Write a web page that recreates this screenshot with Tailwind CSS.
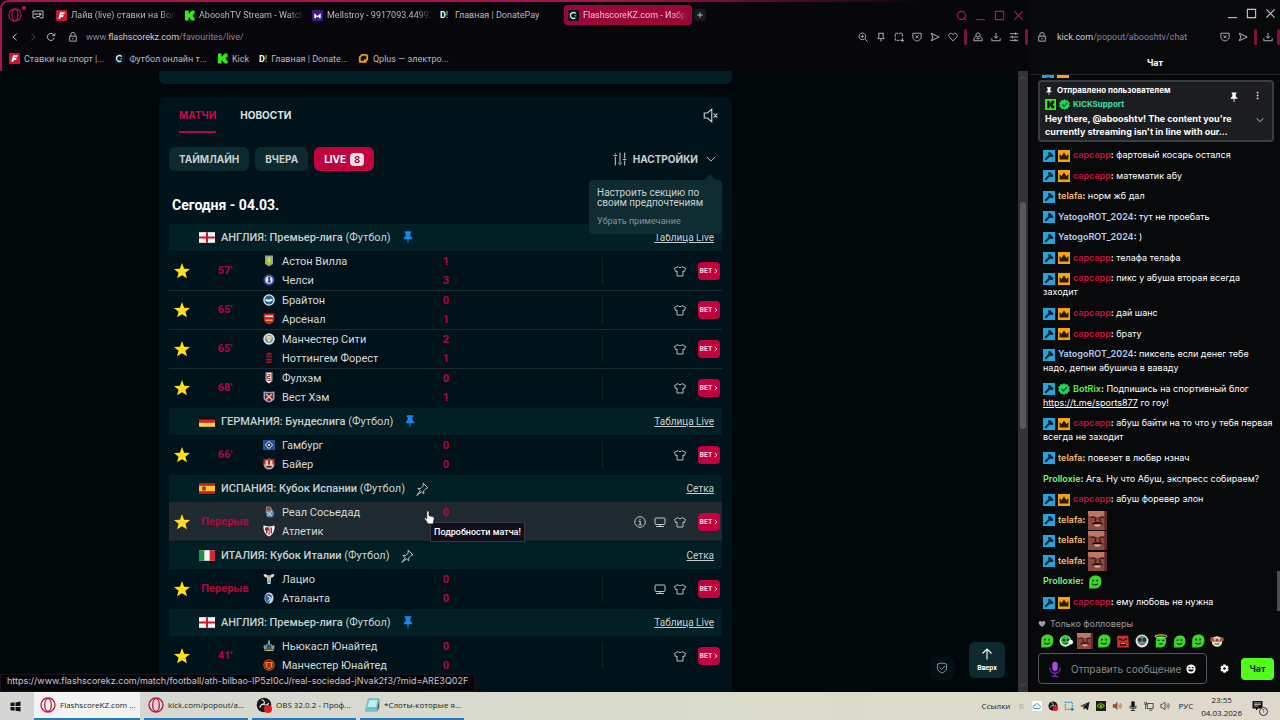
<!DOCTYPE html>
<html lang="ru">
<head>
    <meta charset="UTF-8">
    <meta name="viewport" content="width=device-width, initial-scale=1.0">
    <title>FlashscoreKZ.com - Избранное</title>
    <script src="https://cdn.jsdelivr.net/npm/@tailwindcss/browser@4"></script>
</head>
<body class="h-screen flex flex-col overflow-hidden bg-[#07060b] text-[#b9b6c2] font-['Roboto','Liberation_Sans',sans-serif] text-[9px] leading-[12px]">

    <!-- Icons -->
    <svg class="hidden" xmlns="http://www.w3.org/2000/svg">
        <symbol id="opera" viewBox="0 0 24 24"><g fill="none" stroke="#c01648" stroke-width="2"><circle cx="12" cy="12" r="10.5"/><ellipse cx="12" cy="12" rx="5" ry="9.5"/></g></symbol>
        <symbol id="gamepad" viewBox="0 0 24 24"><path d="M2 4h20v14h-5l-2-3H9l-2 3H2zM6 8v4M10 8v4M14 9h4v3h-4z" fill="none" stroke="currentColor" stroke-width="2"/></symbol>
        <symbol id="flash" viewBox="0 0 24 24"><rect width="24" height="24" rx="3" fill="#d2152f"/><path d="M9 5h10l-1 4h-6l-.5 2h5l-1 4h-5L9 19H5z" fill="#fff"/></symbol>
        <symbol id="kick" viewBox="0 0 24 24"><path d="M2 1h8v6h3V4h3V1h7v8h-3v3h-1v1h1v3h3v7h-7v-3h-3v-3h-3v6H2z" fill="#35e81c"/></symbol>
        <symbol id="kickbox" viewBox="0 0 24 24"><rect width="24" height="24" fill="#35e81c"/><path d="M5 4h5v5h2V7h2V4h6v6h-3v4h3v6h-6v-3h-2v-2h-2v5H5z" fill="#0b1208"/></symbol>
        <symbol id="mell" viewBox="0 0 24 24"><rect width="24" height="24" rx="3" fill="#3b1a86"/><path d="M5 18V7l7 6 7-6v11h-4v-4l-3 2-3-2v4z" fill="#fff"/></symbol>
        <symbol id="fscore" viewBox="0 0 24 24"><rect width="24" height="24" rx="4" fill="#06161d"/><path d="M17 8a6.500 6.500 0 1 0-1 9" fill="none" stroke="#dfe8e8" stroke-width="3"/><path d="M14 11h4v3h-4z" fill="#16b89c"/></symbol>
        <symbol id="qplus" viewBox="0 0 24 24"><path d="M19 4H9L4 9v10h11l5-5V4M14 14l4 7" fill="none" stroke="#f09a1c" stroke-width="4"/></symbol>
        <symbol id="back" viewBox="0 0 24 24"><path d="M16 4l-9 8 9 8" fill="none" stroke="currentColor" stroke-width="2.400"/></symbol>
        <symbol id="fwd" viewBox="0 0 24 24"><path d="M8 4l9 8-9 8" fill="none" stroke="currentColor" stroke-width="2.400"/></symbol>
        <symbol id="bet" viewBox="0 0 12 16"><path d="M2 2l7 6-7 6" fill="none" stroke="currentColor" stroke-width="3"/></symbol>
        <symbol id="reload" viewBox="0 0 24 24"><path d="M20 14a8.500 8.500 0 1 1-2-8l3 3M21 3v6h-6" fill="none" stroke="currentColor" stroke-width="2.400"/></symbol>
        <symbol id="lock" viewBox="0 0 24 24"><path d="M4 10h16v12H4zM7 10V6a5 5 0 0 1 10 0v4M12 14v4" fill="none" stroke="currentColor" stroke-width="2.200"/></symbol>
        <symbol id="zoom" viewBox="0 0 24 24"><path d="M10.500 2.500a8 8 0 1 0 .01 0M17 17l6 6M10.500 7v7M7 10.500h7" fill="none" stroke="currentColor" stroke-width="2.200"/></symbol>
        <symbol id="search" viewBox="0 0 24 24"><path d="M12 3a9 9 0 1 0 .01 0M17 17l5 5" fill="none" stroke="currentColor" stroke-width="2.200"/></symbol>
        <symbol id="tack" viewBox="0 0 24 24"><path d="M5 3h14M7 3v9l-3 4h16l-3-4V3M12 16v7" fill="none" stroke="currentColor" stroke-width="2.200"/></symbol>
        <symbol id="capture" viewBox="0 0 24 24"><path d="M13 20H3V3h17v10" fill="none" stroke="currentColor" stroke-width="2.200" stroke-dasharray="7 2"/><path d="M20 14v10M15 20h9" stroke="currentColor" stroke-width="2.200"/></symbol>
        <symbol id="shield" viewBox="0 0 24 24"><path d="M2 3h20v10c0 5-6 7-10 9-4-2-10-4-10-9zM8.500 8l7 7M15.500 8l-7 7" fill="none" stroke="currentColor" stroke-width="2.200"/></symbol>
        <symbol id="send" viewBox="0 0 24 24"><path d="M3 3l19 9-19 9 4-9z" fill="none" stroke="currentColor" stroke-width="2.400"/></symbol>
        <symbol id="heart" viewBox="0 0 24 24"><path d="M12 21C5 15 2 12 2 8c0-5 7-7 10-2 3-5 10-3 10 2 0 4-3 7-10 13z" fill="none" stroke="currentColor" stroke-width="2.200"/></symbol>
        <symbol id="heartfill" viewBox="0 0 24 24"><path d="M12 21C5 15 2 12 2 8c0-5 7-7 10-2 3-5 10-3 10 2 0 4-3 7-10 13z" fill="currentColor"/></symbol>
        <symbol id="user" viewBox="0 0 24 24"><path d="M12 2a5 5 0 1 0 .01 0M7 10l-5 6v5h20v-5l-5-6M8 16h8" fill="none" stroke="currentColor" stroke-width="2.200"/></symbol>
        <symbol id="download" viewBox="0 0 24 24"><path d="M12 2v13M7 10l5 5 5-5M2 15v6h20v-6" fill="none" stroke="currentColor" stroke-width="2.200"/></symbol>
        <symbol id="menu" viewBox="0 0 24 24"><path d="M2 4h20M2 12h20M2 20h20M16 1v6M8 9v6M14 17v6" fill="none" stroke="currentColor" stroke-width="2.200"/></symbol>
        <symbol id="min" viewBox="0 0 24 24"><path d="M2 21h20" stroke="currentColor" stroke-width="2.400"/></symbol>
        <symbol id="max" viewBox="0 0 24 24"><path d="M3 3h18v18H3z" fill="none" stroke="currentColor" stroke-width="2.400"/></symbol>
        <symbol id="close" viewBox="0 0 24 24"><path d="M3 3l18 18M21 3L3 21" stroke="currentColor" stroke-width="2.400"/></symbol>
        <symbol id="plus" viewBox="0 0 24 24"><path d="M12 4v16M4 12h16" stroke="currentColor" stroke-width="3"/></symbol>
        <symbol id="mute" viewBox="0 0 24 24"><path d="M2 8h5l7-6v20l-7-6H2zM17 9l6 6M23 9l-6 6" fill="none" stroke="currentColor" stroke-width="1.800"/></symbol>
        <symbol id="sliders" viewBox="0 0 24 24"><path d="M4 2v2M4 8v15M12 1v16M12 21v2M20 1v10M20 15v8M1 6h6M9 19h6M17 13h6" fill="none" stroke="currentColor" stroke-width="1.700"/></symbol>
        <symbol id="chev" viewBox="0 0 24 24"><path d="M2 7l10 10L22 7" fill="none" stroke="currentColor" stroke-width="2.200"/></symbol>
        <symbol id="star" viewBox="0 0 24 24"><path d="M12 0l3.200 8.500L24 9l-6.900 5.500L19.500 23 12 18.200 4.500 23l2.400-8.500L0 9l8.800-.5z" fill="#ffdf1b"/></symbol>
        <symbol id="pinon" viewBox="0 0 24 32"><path d="M4 1h16v3l-2 2v7l4 4v3h-8l-2 12-2-12H2v-3l4-4V6L4 4z" fill="#1d83ea"/></symbol>
        <symbol id="pinoff" viewBox="0 0 24 24"><path d="M14 2l8 8-3 1-4 4v5l-4-3-8 6 6-8-4-4h5l4-4z" fill="none" stroke="currentColor" stroke-width="1.600"/></symbol>
        <symbol id="shirt" viewBox="0 0 24 24"><path d="M8 3L1 7l2 6 3-1v10h12V12l3 1 2-6-7-4c-1 3-7 3-8 0z" fill="none" stroke="currentColor" stroke-width="1.800"/></symbol>
        <symbol id="tv" viewBox="0 0 24 24"><path d="M4 4h16a2 2 0 0 1 2 2v9a2 2 0 0 1-2 2H4a2 2 0 0 1-2-2V6a2 2 0 0 1 2-2zM4 21h16M12 17v4" fill="none" stroke="currentColor" stroke-width="1.900"/></symbol>
        <symbol id="info" viewBox="0 0 24 24"><path d="M12 1.500a10.500 10.500 0 1 0 .01 0M9 10.500h3.500V17M8.500 17.500h7M12 6v2.500" fill="none" stroke="currentColor" stroke-width="2"/></symbol>
        <symbol id="okshield" viewBox="0 0 24 24"><path d="M3 4l9-2 9 2v9c0 5-5 7-9 9-4-2-9-4-9-9zM7 11l4 4 7-7" fill="none" stroke="currentColor" stroke-width="2"/></symbol>
        <symbol id="up" viewBox="0 0 24 24"><path d="M12 2v21M3 11l9-9 9 9" fill="none" stroke="currentColor" stroke-width="2.200"/></symbol>
        <symbol id="hammer" viewBox="0 0 24 24"><rect width="24" height="24" fill="#20a5e0"/><path d="M10 5l4-1 7 7-2 3h-3l-2-1-8 8-3-3 8-8z" fill="#06202d"/></symbol>
        <symbol id="crown" viewBox="0 0 24 24"><rect width="24" height="24" fill="#f6a414"/><path d="M3 8l4 4 5-7 5 7 4-4v11H3z" fill="#2b1a02"/></symbol>
        <symbol id="verified" viewBox="0 0 24 24"><path d="M12 0l3 3 4-1 1 4 4 2-2 4 2 4-4 2-1 4-4-1-3 3-3-3-4 1-1-4-4-2 2-4-2-4 4-2 1-4 4 1z" fill="#1ed65a"/><path d="M7 12l4 4 7-8" fill="none" stroke="#053" stroke-width="3"/></symbol>
        <symbol id="pinwhite" viewBox="0 0 24 24"><path d="M6 1h12v2l-2 2v6l4 3v2h-7v8h-2v-8H4v-2l4-3V5L6 3z" fill="#fff"/></symbol>
        <symbol id="laugh" viewBox="0 0 28 28"><rect width="28" height="28" fill="#8d4a42"/><path d="M0 0h28v6c-8 4-20 4-28 0z" fill="#b97766"/><path d="M4 10c3-2 6-1 8 1M16 11c2-2 5-3 8-1M12 11l-2 5M17 12l2 4" fill="none" stroke="#43181a" stroke-width="2"/><path d="M5 20c2-5 16-5 18 0l-4-1H9z" fill="#1f0c0d"/><path d="M9 20h10l-2 3h-6z" fill="#d9b3a4"/><path d="M24 0h4v28h-4z" fill="#5e2b2c"/></symbol>
        <symbol id="blob" viewBox="0 0 24 24"><path d="M2 23V12C2 5 6 1 13 1s10 4 10 10-4 12-11 12z" fill="#3fd42c"/><path d="M7 8h3v3H7zM14 8h3v3h-3z" fill="#0b4a10"/><path d="M7 15c3 3 7 3 10 0" fill="none" stroke="#0b4a10" stroke-width="2"/></symbol>
        <symbol id="blobhp" viewBox="0 0 24 24"><circle cx="11" cy="12" r="10" fill="#e7efe6"/><circle cx="11" cy="11" r="8" fill="#2fc93a"/><path d="M7 9h3v3H7zM14 9h3v3h-3zM8 16h7" stroke="#0b4a10" stroke-width="1.500"/><circle cx="20" cy="14" r="4" fill="#fff"/></symbol>
        <symbol id="blobred" viewBox="0 0 24 24"><path d="M2 3h19l1 20H2z" fill="#c9302f"/><path d="M5 8l6 3M19 8l-6 3" stroke="#2c0404" stroke-width="2.500"/><path d="M7 15h10v5H7z" fill="#2c0404"/><path d="M8 16h8v1H8z" fill="#fff"/></symbol>
        <symbol id="blobclown" viewBox="0 0 24 24"><circle cx="12" cy="12" r="11" fill="#e9e3ee"/><circle cx="12" cy="11" r="8" fill="#39b549"/><circle cx="8" cy="10" r="3.500" fill="#4a1763"/><circle cx="16" cy="10" r="3.500" fill="#4a1763"/><path d="M7 17c3 3 7 3 10 0z" fill="#c22fa0"/></symbol>
        <symbol id="blobhalo" viewBox="0 0 24 24"><path d="M3 23V12c0-5 3-8 9-8s9 3 9 8-3 11-9 11z" fill="#3fd42c"/><ellipse cx="12" cy="4" rx="10" ry="2.500" fill="none" stroke="#e6c95a" stroke-width="1.800"/><path d="M6 11h4M14 11h4M9 17h6" stroke="#0b4a10" stroke-width="2"/></symbol>
        <symbol id="blobears" viewBox="0 0 24 24"><circle cx="4" cy="9" r="4" fill="#b33a35"/><circle cx="20" cy="9" r="4" fill="#b33a35"/><circle cx="12" cy="13" r="9" fill="#dfe7c8"/><path d="M4 8h16v5H4z" fill="#a82b2b"/><path d="M7 10h3M14 10h3" stroke="#fff" stroke-width="2"/><path d="M8 17h8" stroke="#4c6b2a" stroke-width="2"/></symbol>
        <symbol id="mic" viewBox="0 0 24 24"><rect x="8" y="1" width="8" height="14" rx="4" fill="#b045e8"/><path d="M4 10c0 11 16 11 16 0M12 18v5M7 23h10" fill="none" stroke="#7a2db0" stroke-width="2"/></symbol>
        <symbol id="smile" viewBox="0 0 24 24"><circle cx="12" cy="12" r="11" fill="#fff"/><path d="M6 7h4v3H6zM14 7h4v3h-4zM5 13h14c-1 7-13 7-14 0z" fill="#111"/></symbol>
        <symbol id="gear" viewBox="0 0 24 24"><path d="M9 1h6l1 4 4-1 3 5-3 3 3 3-3 5-4-1-1 4H9l-1-4-4 1-3-5 3-3-3-3 3-5 4 1z" fill="#fff"/><circle cx="12" cy="12" r="3.500" fill="#0b0c0d"/></symbol>
        <symbol id="hand" viewBox="0 0 24 32"><path d="M8 2c3 0 3 2 3 4v6l8 2c3 1 4 3 3 6l-2 10H9L2 20c-2-3 1-5 3-3l1 2V4c0-1 0-2 2-2z" fill="#fff" stroke="#111" stroke-width="1.500"/></symbol>
        <symbol id="windows" viewBox="0 0 24 24"><path d="M1 4l9-1v8H1zM12 3l11-2v10H12zM1 13h9v8l-9-1zM12 13h11v10l-11-2z" fill="#111"/></symbol>
        <symbol id="obs" viewBox="0 0 24 24"><circle cx="12" cy="12" r="11" fill="#17171b"/><path d="M8 4c3 0 6 3 4 7M19 9c-1 3-5 4-8 2M6 16c0-3 3-6 6-5" fill="none" stroke="#ddd" stroke-width="1.800"/><circle cx="18" cy="18" r="6" fill="#e01b24"/></symbol>
        <symbol id="note" viewBox="0 0 24 24"><path d="M6 2h17l-4 20H1z" fill="#6cc3cf"/><path d="M8 5h12l-2 10H5z" fill="#c8edf0"/><path d="M19 22l4-20v14z" fill="#4c5a5e"/></symbol>
        <symbol id="cloud" viewBox="0 0 24 24"><rect width="24" height="24" rx="3" fill="#fff"/><path d="M6 18a4 4 0 0 1 1-8c1-5 8-5 9 0 5 0 5 8 1 8z" fill="none" stroke="#2877c9" stroke-width="2"/></symbol>
        <symbol id="snip" viewBox="0 0 24 24"><path d="M3 3h17v17H3z" fill="none" stroke="#2680b8" stroke-width="2.500" stroke-dasharray="4 2"/><circle cx="20" cy="20" r="3.500" fill="#2680b8"/></symbol>
        <symbol id="plane" viewBox="0 0 24 24"><path d="M1 12L23 2l-4 20-7-5-3 4-1-7 10-8L5 14z" fill="#1b1b1b"/></symbol>
        <symbol id="nvidia" viewBox="0 0 24 24"><rect width="24" height="24" fill="#17220f"/><path d="M3 12c4-7 13-7 17 0-4 6-13 6-17 0z" fill="none" stroke="#76b900" stroke-width="2.500"/><circle cx="12" cy="12" r="3" fill="#76b900"/></symbol>
        <symbol id="spk" viewBox="0 0 24 24"><path d="M2 8h5l6-6v20l-6-6H2z" fill="currentColor"/><path d="M16 8c2 3 2 5 0 8M19 5c4 4 4 10 0 14" fill="none" stroke="currentColor" stroke-width="2"/></symbol>
        <symbol id="vol" viewBox="0 0 24 24"><path d="M2 8h4l6-5v18l-6-5H2zM16 8c2 3 2 5 0 8M19 5c4 4 4 10 0 14" fill="none" stroke="currentColor" stroke-width="1.800"/></symbol>
        <symbol id="blackmic" viewBox="0 0 24 24"><path d="M8 1h8v14H8z" fill="#111"/><path d="M5 11v6h14v-6M12 17v6M7 23h10" fill="none" stroke="#111" stroke-width="2"/></symbol>
        <symbol id="net" viewBox="0 0 24 24"><path d="M8 6h14v12H8zM12 22h8M2 2v6h4V2M4 8v12" fill="none" stroke="#222" stroke-width="1.800"/></symbol>
        <symbol id="notif" viewBox="0 0 24 24"><path d="M1 2h20v15h-9l-4 4v-4H1z" fill="#111"/><path d="M4 6h14M4 9h14M4 12h9" stroke="#ddd" stroke-width="1.500"/></symbol>

        <!-- Flags -->
        <symbol id="eng" viewBox="0 0 24 16"><rect width="24" height="16" fill="#f4f4f4"/><path d="M10.500 0h3v16h-3zM0 6.500h24v3H0z" fill="#d0142c"/></symbol>
        <symbol id="ger" viewBox="0 0 24 16"><rect width="24" height="16" fill="#111"/><path d="M0 5h24v6H0z" fill="#d22"/><path d="M0 10h24v6H0z" fill="#f7d34a"/></symbol>
        <symbol id="esp" viewBox="0 0 24 16"><rect width="24" height="16" fill="#c8202a"/><path d="M0 4h24v8H0z" fill="#f8c530"/><rect x="5" y="5" width="5" height="6" fill="#8a3a20"/></symbol>
        <symbol id="ita" viewBox="0 0 24 16"><rect width="24" height="16" fill="#f4f4f4"/><path d="M0 0h8v16H0z" fill="#1c8f4a"/><path d="M16 0h8v16h-8z" fill="#cf2b37"/></symbol>

        <!-- Club crests -->
        <symbol id="avl" viewBox="0 0 24 24"><path d="M4 1h16v17l-8 5-8-5z" fill="#8f9fa0"/><path d="M7 4h10v12l-5 4-5-4z" fill="#a9c92f"/><path d="M11 5h3v9h-3z" fill="#eee04a"/></symbol>
        <symbol id="che" viewBox="0 0 24 24"><circle cx="12" cy="12" r="11.500" fill="#3a3f96"/><circle cx="12" cy="12" r="7.500" fill="#dfe3f2"/><path d="M10 6h5l-1 5 2 6H9l2-5z" fill="#263a9a"/></symbol>
        <symbol id="bha" viewBox="0 0 24 24"><circle cx="12" cy="12" r="11.500" fill="#e8f1f7"/><circle cx="12" cy="12" r="9" fill="#1d6ca8"/><path d="M4 12c4-4 6 1 9-1s5-1 7 0c-3 5-12 6-16 1z" fill="#fff"/></symbol>
        <symbol id="ars" viewBox="0 0 24 24"><path d="M1 1h22l-1 14c-1 4-5 6-10 8-5-2-9-4-10-8z" fill="#c9232d"/><path d="M4 5h16v3H4z" fill="#f0d6d0"/><path d="M5 13h14v3H5z" fill="#d9a54a"/></symbol>
        <symbol id="mci" viewBox="0 0 24 24"><circle cx="12" cy="12" r="11.500" fill="#dfe6ea"/><circle cx="12" cy="12" r="8" fill="#6b98b4"/><path d="M7 6h10v6H7z" fill="#e7d58b"/><path d="M8 13h8l-4 5z" fill="#eee"/></symbol>
        <symbol id="nfo" viewBox="0 0 24 24"><path d="M8 12V6c0-5 8-5 8 0v6M12 3v10M6 15h12M6 18h12M7 21h10" fill="none" stroke="#b3122c" stroke-width="2.200"/></symbol>
        <symbol id="ful" viewBox="0 0 24 24"><path d="M5 1h14v17l-7 5-7-5z" fill="#f1f1f1"/><path d="M9 5h5v4H9v4h5v4H9" fill="none" stroke="#b32a2e" stroke-width="2"/><path d="M5 1h2v18l-2-1zM17 1h2v17l-2 1z" fill="#333"/></symbol>
        <symbol id="whu" viewBox="0 0 24 24"><path d="M1 1l11 1 11-1v14c-2 4-6 7-11 8-5-1-9-4-11-8z" fill="#97a7b8"/><path d="M4 4h16v11l-8 6-8-6z" fill="#7c2436"/><path d="M6 6l12 11M18 6L6 17" stroke="#e8c9a8" stroke-width="2.500"/></symbol>
        <symbol id="ham" viewBox="0 0 24 24"><rect y="2" width="24" height="20" fill="#1d55a5"/><path d="M12 4l8 8-8 8-8-8z" fill="#fff"/><path d="M12 6l6 6-6 6-6-6z" fill="#111"/><path d="M12 9l3 3-3 3-3-3z" fill="#fff"/></symbol>
        <symbol id="lev" viewBox="0 0 24 24"><circle cx="12" cy="12" r="11" fill="#d9a7a0"/><path d="M1 2h22v11H1z" fill="#c0202a"/><path d="M5 5h5v9H5zM14 5h5v9h-5z" fill="#f3d6b8"/><path d="M7 16h10v3H7z" fill="#222"/></symbol>
        <symbol id="rso" viewBox="0 0 24 24"><path d="M6 1h9l3 5-2 8H5z" fill="#b5773a"/><circle cx="14" cy="15" r="8" fill="#5d84b4"/><path d="M8 12l10 8M18 10L9 20" stroke="#dce6f0" stroke-width="2"/><path d="M8 3h6v5H8z" fill="#705038"/></symbol>
        <symbol id="ath" viewBox="0 0 24 24"><path d="M1 1l11 2 11-2c1 11-4 19-11 22C5 20 0 12 1 1z" fill="#efefef"/><path d="M6 5h3v12H6zM11 5h2v15h-2zM15 5h3v12h-3z" fill="#c8232c"/><path d="M4 5h7v6H4z" fill="#444"/></symbol>
        <symbol id="laz" viewBox="0 0 24 24"><path d="M1 3c4-1 7 0 8 2h6c1-2 4-3 8-2-1 5-4 6-7 6l-1 13H9L8 9C5 9 2 8 1 3z" fill="#dfe4d8"/><path d="M9 5h6v4H9z" fill="#b79a45"/><path d="M10 11h4v9h-4z" fill="#79b6dc"/></symbol>
        <symbol id="ata" viewBox="0 0 24 24"><ellipse cx="12" cy="12" rx="9" ry="11" fill="#cfd9e4"/><path d="M5 7c6-6 13-2 13 4-4 0-3 9-7 11-5-1-8-8-6-15z" fill="#2a62a8"/><path d="M9 8l6 3-4 7" fill="none" stroke="#fff" stroke-width="2"/></symbol>
        <symbol id="new" viewBox="0 0 24 24"><path d="M6 8h12v10l-6 5-6-5z" fill="#4d8b98"/><path d="M10 1h4v7h-4zM1 12c2-3 4-3 5 1v6H2zM23 12c-2-3-4-3-5 1v6h4z" fill="#8f9994"/><path d="M9 10h2v9H9zM13 10h2v9h-2z" fill="#16212a"/><path d="M3 20h18v2H3z" fill="#c8b060"/></symbol>
        <symbol id="mun" viewBox="0 0 24 24"><circle cx="12" cy="12" r="11.500" fill="#d4481f"/><circle cx="12" cy="12" r="9" fill="#2d130f"/><path d="M5 6h14v10l-7 5-7-5z" fill="#e88a1f"/><path d="M8 8h8v8l-4 3-4-3z" fill="#c31f1c"/></symbol>
    </svg>

    <div class="flex min-h-0 flex-1">

        <!-- Main browser window -->
        <div class="relative flex min-w-0 flex-1 flex-col">
            <!-- Glow on the window corner -->
            <div class="pointer-events-none absolute inset-x-0 top-0 h-20 rounded-tl-lg border-t-2 border-l-2 border-[#a5154a] [mask-image:linear-gradient(to_right,#000_60%,transparent_90%)]"></div>

            <div class="mt-0.5 flex h-[26px] items-center pl-2">
                <div class="relative"><svg class="size-[14px]"><use href="#opera"/></svg><i class="absolute -right-1 -top-0.5 size-1 rounded-full bg-[#b8174b]"></i></div>
                <svg class="ml-2.5 mr-2 size-3"><use href="#gamepad"/></svg>
                <a href="#" class="flex w-32 items-center gap-1 px-1"><svg class="size-[11px] shrink-0"><use href="#flash"/></svg><span class="overflow-hidden whitespace-nowrap [mask-image:linear-gradient(to_right,#000_85%,transparent)]">Лайв (live) ставки на Волейбол</span></a>
                <a href="#" class="flex w-32 items-center gap-1 px-1"><svg class="size-[11px] shrink-0"><use href="#kick"/></svg><span class="overflow-hidden whitespace-nowrap [mask-image:linear-gradient(to_right,#000_85%,transparent)]">AbooshTV Stream - Watch Live</span></a>
                <a href="#" class="flex w-32 items-center gap-1 px-1"><svg class="size-[11px] shrink-0"><use href="#mell"/></svg><span class="overflow-hidden whitespace-nowrap [mask-image:linear-gradient(to_right,#000_85%,transparent)]">Mellstroy - 9917093.449920</span></a>
                <a href="#" class="flex w-32 items-center gap-1 px-1"><b class="w-[11px] text-white">D<span class="text-[#2fc25b]">!</span></b><span class="whitespace-nowrap">Главная | DonatePay</span></a>
                <a href="#" class="flex h-5 w-32 items-center gap-1 rounded-sm bg-[#9c0537] px-1 text-[#f0c4d2]"><svg class="size-[11px] shrink-0"><use href="#fscore"/></svg><span class="overflow-hidden whitespace-nowrap [mask-image:linear-gradient(to_right,#000_85%,transparent)]">FlashscoreKZ.com - Избранное</span></a>
                <button aria-label="Новая вкладка" class="ml-0.5 flex size-3 items-center justify-center rounded-sm bg-[#1b1826]"><svg class="size-2"><use href="#plus"/></svg></button>
                <div class="ml-auto mr-1.5 flex gap-2 text-[#b8174b]">
                    <button aria-label="Поиск"><svg class="size-[11px]"><use href="#search"/></svg></button>
                    <button aria-label="Свернуть"><svg class="size-[11px]"><use href="#min"/></svg></button>
                    <button aria-label="Развернуть"><svg class="size-[11px]"><use href="#max"/></svg></button>
                    <button aria-label="Закрыть"><svg class="size-[11px]"><use href="#close"/></svg></button>
                </div>
            </div>

            <div class="flex h-[18px] items-center pl-2.5">
                <div class="flex items-center gap-2">
                    <button aria-label="Назад"><svg class="size-2.5"><use href="#back"/></svg></button>
                    <button aria-label="Вперёд" class="text-[#45424f]"><svg class="size-2.5"><use href="#fwd"/></svg></button>
                    <button aria-label="Обновить"><svg class="size-2.5"><use href="#reload"/></svg></button>
                    <svg class="ml-1 size-2.5"><use href="#lock"/></svg>
                </div>
                <span class="ml-2 text-[#8a82a8]">www.<span class="text-[#d0cdd8]">flashscorekz.com</span>/favourites/live/</span>
                <div class="ml-auto mr-1 flex items-center gap-2">
                    <button aria-label="Масштаб"><svg class="size-2.5"><use href="#zoom"/></svg></button>
                    <button aria-label="Закрепить"><svg class="size-2.5"><use href="#tack"/></svg></button>
                    <button aria-label="Снимок"><svg class="size-2.5"><use href="#capture"/></svg></button>
                    <button aria-label="Защита"><svg class="size-2.5"><use href="#shield"/></svg></button>
                    <button aria-label="Отправить"><svg class="size-2.5"><use href="#send"/></svg></button>
                    <button aria-label="Закладка"><svg class="size-2.5"><use href="#heart"/></svg></button>
                    <i class="-mx-0.5 h-4 w-[3px] rounded bg-[#7d1136]"></i>
                    <button aria-label="Профиль"><svg class="size-2.5"><use href="#user"/></svg></button>
                    <button aria-label="Загрузки"><svg class="size-2.5"><use href="#download"/></svg></button>
                    <button aria-label="Меню"><svg class="size-2.5"><use href="#menu"/></svg></button>
                    <i class="-mx-0.5 h-4 w-[3px] rounded bg-[#7d1136]"></i>
                </div>
            </div>

            <nav class="flex h-[25px] items-center gap-2.5 pl-[9px]">
                <a href="#" class="flex items-center gap-1"><svg class="size-[11px]"><use href="#flash"/></svg>Ставки на спорт |...</a>
                <a href="#" class="flex items-center gap-1"><svg class="size-[11px]"><use href="#fscore"/></svg>Футбол онлайн т...</a>
                <a href="#" class="flex items-center gap-1"><svg class="size-[11px]"><use href="#kick"/></svg>Kick</a>
                <a href="#" class="flex items-center gap-1"><b class="text-white">D<span class="text-[#2fc25b]">!</span></b>Главная | Donate...</a>
                <a href="#" class="flex items-center gap-1"><svg class="size-[11px]"><use href="#qplus"/></svg>Qplus — электро...</a>
            </nav>

            <div class="relative flex min-h-0 flex-1 bg-[#00080a]">
                <main class="ml-[159px] flex w-[573px] flex-col overflow-hidden">
                    <div class="mb-[13px] h-[13px] shrink-0 rounded-b-md bg-[#011f24]"></div>

                    <section class="flex-1 rounded-t-md bg-[#00131a] px-2.5 text-[11px] text-[#c9cfcf]">
                        <div class="flex h-9 items-center gap-6 px-2.5 font-['Inter'] text-[10px] font-bold">
                            <a href="#" class="flex h-full items-center border-y-2 border-t-transparent border-b-[#b80640] text-[#cc0845]">МАТЧИ</a>
                            <a href="#" class="text-[#dfe3e3]">НОВОСТИ</a>
                            <button aria-label="Звук" class="-mr-1.5 ml-auto"><svg class="size-[15px]"><use href="#mute"/></svg></button>
                        </div>

                        <div class="mt-3.5 flex items-center gap-1.5 font-['Inter'] text-[10px] font-bold">
                            <button class="h-6 rounded-md bg-[#0c2a30] px-2.5">ТАЙМЛАЙН</button>
                            <button class="h-6 rounded-md bg-[#0c2a30] px-2.5">ВЧЕРА</button>
                            <button class="flex h-6 items-center gap-1 rounded-md bg-[#c0033f] px-2.5 text-white">LIVE <span class="rounded-sm bg-[#f6dfe7] px-1 text-[9px] leading-[13px] text-[#a00838]">8</span></button>
                            <div class="relative ml-auto mr-1.5">
                                <button class="flex items-center gap-1.5"><svg class="size-[14px]"><use href="#sliders"/></svg>НАСТРОЙКИ<svg class="ml-0.5 size-[10px]"><use href="#chev"/></svg></button>
                                <div class="absolute -right-1.5 top-7 z-10 w-[133px] rounded bg-[#102c33] p-2 font-['Roboto'] font-normal leading-[10px]">
                                    <i class="absolute -top-1 right-2 size-2 rotate-45 bg-[#102c33]"></i>
                                    <p>Настроить секцию по своим предпочтениям</p>
                                    <button class="mt-2 block text-[9px] text-[#82959a]">Убрать примечание</button>
                                </div>
                            </div>
                        </div>

                        <h2 class="mt-6 pb-2 pl-[3px] text-[14px] font-bold leading-5 text-white">Сегодня - 04.03.</h2>

                        <table class="w-full table-fixed text-left">
                            <colgroup>
                                <col class="w-[26px]"><col class="w-[60px]"><col><col class="w-8"><col class="w-[140px]"><col class="w-[120px]">
                            </colgroup>
                            <tbody id="matches"></tbody>
                        </table>
                    </section>
                </main>

                <button class="absolute bottom-3 right-[76px] flex size-6 items-center justify-center rounded-md bg-[#040f13] text-[#7f9297]" aria-label="Конфиденциальность"><svg class="size-3"><use href="#okshield"/></svg></button>
                <button class="absolute bottom-3.5 right-[25px] flex h-9 w-9 flex-col items-center justify-center gap-1 rounded-md bg-[#0e2a30] text-[7px] font-bold leading-[8px] text-white"><svg class="size-3"><use href="#up"/></svg>Вверх</button>

                <!-- Page scrollbar -->
                <div class="ml-auto mr-0.5 flex w-2.5 flex-col items-center justify-between bg-[#343236] pb-1 text-[#77757a]">
                    <svg class="mt-1 size-1.5 rotate-180"><use href="#chev"/></svg>
                    <div class="mb-auto mt-[121px] h-[227px] w-1.5 rounded bg-[#5a585c]"></div>
                    <svg class="size-1.5"><use href="#chev"/></svg>
                </div>

                <div class="absolute bottom-0 left-0 border border-[#15131d] bg-[#06050a] px-1.5 pb-1 font-['Inter'] leading-[12px] text-[#c9c6d2]">https://www.flashscorekz.com/match/football/ath-bilbao-IP5zI0cJ/real-sociedad-jNvak2f3/?mid=ARE3Q02F</div>
            </div>
        </div>

        <!-- Chat popup window -->
        <aside class="flex w-[250px] flex-col bg-[#08090a] font-['Inter','Liberation_Sans',sans-serif] text-white">
            <div class="flex h-[26px] items-center justify-end gap-2 pr-1 text-[#c8c6cc]">
                <button aria-label="Свернуть"><svg class="size-[11px]"><use href="#min"/></svg></button>
                <button aria-label="Развернуть"><svg class="size-[11px]"><use href="#max"/></svg></button>
                <button aria-label="Закрыть"><svg class="size-[11px]"><use href="#close"/></svg></button>
            </div>
            <div class="flex h-[22px] items-center pl-[7px] text-[#b9b6c2]">
                <svg class="size-2.5"><use href="#lock"/></svg>
                <span class="ml-2.5 font-['Roboto'] text-[#8a82a8]"><span class="text-[#d0cdd8]">kick.com</span>/popout/abooshtv/chat</span>
                <div class="ml-auto flex items-center gap-2">
                    <svg class="size-2.5"><use href="#shield"/></svg>
                    <svg class="size-2.5"><use href="#send"/></svg>
                    <i class="-mx-0.5 h-4 w-[3px] rounded bg-[#7d1136]"></i>
                    <svg class="size-2.5"><use href="#download"/></svg>
                    <i class="-ml-1 h-4 w-[3px] rounded bg-[#7d1136]"></i>
                </div>
            </div>
            <h1 class="flex h-[26px] items-center justify-center pt-1 text-[9px] font-bold">Чат</h1>

            <div class="relative flex min-h-0 flex-1 flex-col border-t border-[#222427] pl-2 pr-1.5">
                <i class="absolute bottom-[81px] right-0 h-10 w-[3px] bg-[#4c4e51]"></i>
                <div class="flex h-[3px] gap-[3px] overflow-hidden pl-1"><svg class="size-3"><use href="#hammer"/></svg><svg class="size-3"><use href="#crown"/></svg></div>
                <div class="relative mt-0.5 rounded-sm border-2 border-[#3b3e41] bg-[#1b1d20] px-[5px] py-0.5 font-bold leading-[13px]">
                    <p class="flex items-center gap-1 text-[8px]"><svg class="size-2"><use href="#pinwhite"/></svg>Отправлено пользователем</p>
                    <p class="flex items-center gap-[3px] text-[8px] leading-[15px] text-[#3be0a8]"><svg class="size-[11px]"><use href="#kickbox"/></svg><svg class="size-[11px]"><use href="#verified"/></svg>KICKSupport</p>
                    <p class="w-[205px]">Hey there, @abooshtv! The content you're currently streaming isn't in line with our...</p>
                    <button aria-label="Открепить" class="absolute right-[33px] top-2.5"><svg class="size-2.5"><use href="#pinwhite"/></svg></button>
                    <button aria-label="Ещё" class="absolute right-2.5 top-1.5 leading-4">⋮</button>
                    <button aria-label="Развернуть сообщение" class="absolute bottom-4 right-2"><svg class="size-2"><use href="#chev"/></svg></button>
                </div>

                <ul id="chat" class="flex min-h-0 flex-1 flex-col justify-between pl-[5px] pt-1.5 leading-[14px]"></ul>

                <p class="mt-2 flex items-center gap-1 leading-[14px] text-[#9a9ca0]"><svg class="size-2"><use href="#heartfill"/></svg>Только фолловеры</p>
                <div class="mb-1 mt-0.5 flex items-center gap-[5px] pl-0.5">
                    <svg class="size-[14px]"><use href="#blob"/></svg>
                    <svg class="size-[14px]"><use href="#blobhp"/></svg>
                    <svg class="-mx-px size-4"><use href="#laugh"/></svg>
                    <svg class="size-[14px]"><use href="#blob"/></svg>
                    <svg class="size-[14px]"><use href="#blobred"/></svg>
                    <svg class="size-[14px]"><use href="#blobclown"/></svg>
                    <svg class="size-[14px]"><use href="#blobhalo"/></svg>
                    <svg class="size-[13px]"><use href="#blob"/></svg>
                    <svg class="size-[14px]"><use href="#blob"/></svg>
                    <svg class="size-[14px]"><use href="#blobears"/></svg>
                </div>
                <form class="mb-2 flex items-center">
                    <div class="flex h-[31px] w-[169px] items-center rounded-sm border border-[#55585b] pl-2 pr-2.5">
                        <svg class="size-4 shrink-0"><use href="#mic"/></svg>
                        <input type="text" aria-label="Сообщение" placeholder="Отправить сообщение" class="ml-2 min-w-0 flex-1 bg-transparent text-[10px] outline-none placeholder:text-[#85888c]">
                        <svg class="size-[10px] shrink-0"><use href="#smile"/></svg>
                    </div>
                    <button type="button" aria-label="Настройки чата" class="mx-auto"><svg class="size-[9px]"><use href="#gear"/></svg></button>
                    <button type="button" class="h-[22px] w-[33px] rounded-sm bg-[#53fc18] text-[9px] font-bold text-[#0c2a05]">Чат</button>
                </form>
            </div>
        </aside>
    </div>

    <!-- Taskbar -->
    <footer class="flex h-7 items-stretch gap-1 whitespace-nowrap bg-linear-to-r from-[#d5d6d4] via-[#d9dccb] to-[#dfd9cc] font-['Open_Sans','Noto_Sans',sans-serif] text-[8px] text-[#1c1c1c]">
        <button aria-label="Пуск" class="w-[30px] pl-2.5"><svg class="size-[11px]"><use href="#windows"/></svg></button>
        <button class="flex w-[106px] items-center gap-1 border-b-2 border-[#2b79bd] bg-[#f3f3f3] px-1.5"><svg class="size-4 shrink-0"><use href="#opera"/></svg>FlashscoreKZ.com ...</button>
        <button class="flex w-[104px] items-center gap-1 border-b-2 border-[#2b79bd] px-1"><svg class="size-4 shrink-0"><use href="#opera"/></svg>kick.com/popout/a...</button>
        <button class="flex w-[104px] items-center gap-1 border-b-2 border-[#2b79bd] px-1"><svg class="size-4 shrink-0"><use href="#obs"/></svg>OBS 32.0.2 - Проф...</button>
        <button class="flex w-[104px] items-center gap-1 border-b-2 border-[#2b79bd] px-1"><svg class="size-4 shrink-0"><use href="#note"/></svg>*Слоты-которые я...</button>
        <div class="ml-auto flex items-center gap-1.5 pr-4">
            <span>Ссылки</span>
            <span class="w-2.5 text-center text-[#a9a9a6]">B</span>
            <svg class="size-[10px]"><use href="#cloud"/></svg>
            <svg class="size-[10px]"><use href="#obs"/></svg>
            <svg class="size-[10px]"><use href="#snip"/></svg>
            <svg class="size-[10px]"><use href="#plane"/></svg>
            <svg class="size-[10px]"><use href="#nvidia"/></svg>
            <svg class="size-[10px] text-[#a8452f]"><use href="#spk"/></svg>
            <svg class="size-[10px]"><use href="#blackmic"/></svg>
            <svg class="size-[10px]"><use href="#net"/></svg>
            <svg class="size-[10px] text-[#333]"><use href="#vol"/></svg>
            <span class="mx-0.5">РУС</span>
            <span class="text-center leading-[13px]">23:55<br>04.03.2026</span>
            <div class="relative ml-1"><svg class="size-3"><use href="#notif"/></svg><span class="absolute -bottom-1 -right-1 size-[9px] rounded-full border border-[#333] bg-[#dcdad2] text-center text-[6px] leading-[7px]">1</span></div>
        </div>
    </footer>

    <script>
        const leagues = [
            { flag: 'eng', name: 'АНГЛИЯ: Премьер-лига', pinned: true, link: 'Таблица Live', games: [
                { time: "57'", teams: [['avl', 'Астон Вилла', 1], ['che', 'Челси', 3]], icons: ['shirt'] },
                { time: "65'", teams: [['bha', 'Брайтон', 0], ['ars', 'Арсенал', 1]], icons: ['shirt'] },
                { time: "65'", teams: [['mci', 'Манчестер Сити', 2], ['nfo', 'Ноттингем Форест', 1]], icons: ['shirt'] },
                { time: "68'", teams: [['ful', 'Фулхэм', 0], ['whu', 'Вест Хэм', 1]], icons: ['shirt'] },
            ] },
            { flag: 'ger', name: 'ГЕРМАНИЯ: Бундеслига', pinned: true, link: 'Таблица Live', games: [
                { time: "66'", teams: [['ham', 'Гамбург', 0], ['lev', 'Байер', 0]], icons: ['shirt'] },
            ] },
            { flag: 'esp', name: 'ИСПАНИЯ: Кубок Испании', pinned: false, link: 'Сетка', games: [
                { time: 'Перерыв', teams: [['rso', 'Реал Сосьедад', 0], ['ath', 'Атлетик', 0]], icons: ['info', 'tv', 'shirt'], hover: true },
            ] },
            { flag: 'ita', name: 'ИТАЛИЯ: Кубок Италии', pinned: false, link: 'Сетка', games: [
                { time: 'Перерыв', teams: [['laz', 'Лацио', 0], ['ata', 'Аталанта', 0]], icons: ['tv', 'shirt'] },
            ] },
            { flag: 'eng', name: 'АНГЛИЯ: Премьер-лига', pinned: true, link: 'Таблица Live', games: [
                { time: "41'", teams: [['new', 'Ньюкасл Юнайтед', 0], ['mun', 'Манчестер Юнайтед', 0]], icons: ['shirt'] },
            ] },
        ];

        const pin = on => on
            ? '<svg class="ml-3 h-[15px] w-[10px]"><use href="#pinon"/></svg>'
            : '<svg class="ml-2.5 size-[14px]"><use href="#pinoff"/></svg>';

        const hint = `
            <svg class="absolute -left-1.5 top-2 z-20 h-[15px] w-[11px]"><use href="#hand"/></svg>
            <span class="absolute left-0 top-5 z-10 whitespace-nowrap border border-[#3a3448] bg-[#120e1c] px-[3px] text-[9px] font-medium leading-[18px] text-white">Подробности матча!</span>`;

        document.getElementById('matches').innerHTML = leagues.map(l => `
            <tr>
                <th colspan="6" class="p-0">
                    <div class="flex h-7 items-center border-t border-[#00131a] bg-[#011f24] pl-[30px] pr-2">
                        <svg class="mr-1.5 h-[11px] w-4"><use href="#${l.flag}"/></svg>
                        <span class="font-medium">${l.name} <span class="font-normal">(Футбол)</span></span>
                        <button aria-label="Закрепить лигу">${pin(l.pinned)}</button>
                        <a href="#" class="ml-auto text-[10px] font-normal underline underline-offset-1">${l.link}</a>
                    </div>
                </th>
            </tr>
            ${l.games.map((g, i) => `
            <tr class="h-[39px] ${g.hover ? 'bg-[#1f2a30]' : ''} ${i ? 'shadow-[inset_0_1px_0_#1b2a31]' : ''}">
                <td><button aria-label="Избранное" class="ml-[5px] block"><svg class="size-4"><use href="#star"/></svg></button></td>
                <td class="text-center font-bold text-[#b3063f]">${g.time}</td>
                <td class="pl-2 leading-[19px] text-[#d5dada]">
                    ${g.teams.map(t => `<div class="flex items-center gap-[7px]"><svg class="size-3"><use href="#${t[0]}"/></svg>${t[1]}</div>`).join('')}
                </td>
                <td class="relative text-center font-bold leading-[19px] text-[#b3063f]">
                    ${g.teams.map(t => `<div>${t[2]}</div>`).join('')}
                    ${g.hover ? hint : ''}
                </td>
                <td></td>
                <td>
                    <div class="flex h-[27px] items-center justify-end gap-2 pr-0.5 ${g.hover ? '' : 'border-l border-[#14232a]'}">
                        ${g.icons.map(n => `<svg class="size-3"><use href="#${n}"/></svg>`).join('')}
                        <button class="ml-1 flex h-[18px] w-[22px] items-center justify-center gap-0.5 rounded-sm bg-[#c0033f] text-[7px] font-bold text-[#f7d5df]">BET<svg class="h-1.5 w-1"><use href="#bet"/></svg></button>
                    </div>
                </td>
            </tr>`).join('')}
        `).join('');

        const users = {
            capcapp: ['text-[#c2103c]', ['hammer', 'crown']],
            telafa: ['text-[#f5b96a]', ['hammer']],
            YatogoROT_2024: ['text-[#b4cdf5]', ['hammer']],
            BotRix: ['text-[#5cf23c]', ['hammer', 'verified']],
            Prolloxie: ['text-[#7df27a]', []],
        };
        const laugh = '<svg class="-my-1 inline-block size-[19px] align-middle"><use href="#laugh"/></svg>';
        const blob = '<svg class="-my-1 ml-0.5 inline-block size-[14px] align-middle"><use href="#blob"/></svg>';
        const messages = [
            ['capcapp', 'фартовый косарь остался'],
            ['capcapp', 'математик абу'],
            ['telafa', 'норм жб дал'],
            ['YatogoROT_2024', 'тут не проебать'],
            ['YatogoROT_2024', ')'],
            ['capcapp', 'телафа телафа'],
            ['capcapp', 'пикс у абуша вторая всегда заходит'],
            ['capcapp', 'дай шанс'],
            ['capcapp', 'брату'],
            ['YatogoROT_2024', 'пиксель если денег тебе надо, депни абушича в ваваду'],
            ['BotRix', 'Подпишись на спортивный блог <a href="#" class="underline">https://t.me/sports877</a> го гоу!'],
            ['capcapp', 'абуш байти на то что у тебя первая всегда не заходит'],
            ['telafa', 'повезет в любвр нзнач'],
            ['Prolloxie', 'Ага. Ну что Абуш, экспресс собираем?'],
            ['capcapp', 'абуш форевер элон'],
            ['telafa', laugh],
            ['telafa', laugh],
            ['telafa', laugh],
            ['Prolloxie', blob],
            ['capcapp', 'ему любовь не нужна'],
        ];
        document.getElementById('chat').innerHTML = messages.map(([user, text]) => `
            <li>${users[user][1].map(b => `<svg class="mr-[3px] inline-block size-3 align-middle"><use href="#${b}"/></svg>`).join('')}<span class="font-semibold"><span class="${users[user][0]}">${user}</span>:</span> ${text}</li>
        `).join('');
    </script>
</body>
</html>
